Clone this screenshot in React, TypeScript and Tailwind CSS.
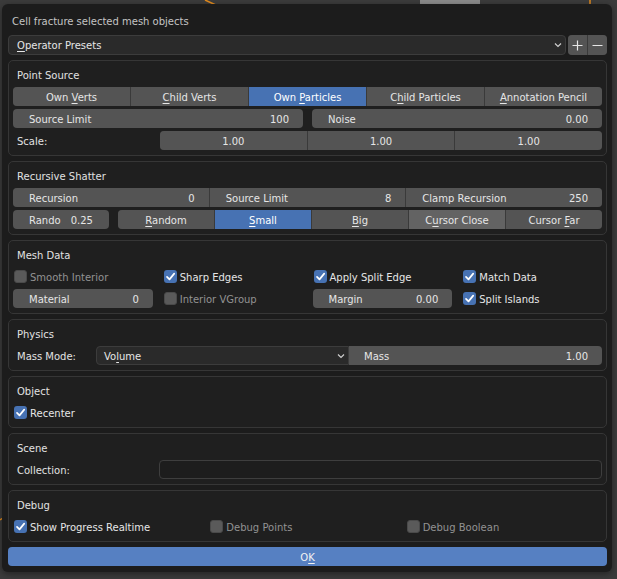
import type { ReactNode } from "react";

const ui = "font-['DejaVu_Sans',sans-serif] text-[10px] leading-none";

function U({ children }: { children: ReactNode }) {
  return <span className="underline decoration-1 underline-offset-2">{children}</span>;
}

function Panel({ title, children }: { title: string; children: ReactNode }) {
  return (
    <section className="rounded-[5px] border border-[#363636] bg-[#1f1f1f] px-[4px] pb-[5px]">
      <div className="flex h-[26px] items-center pl-[4px] pt-[4px] text-[#e2e2e2]">{title}</div>
      <div className="flex flex-col gap-[3px]">{children}</div>
    </section>
  );
}

function Group({ children, className = "" }: { children: ReactNode; className?: string }) {
  return (
    <div className={`flex h-[19px] gap-px overflow-hidden rounded-[4px] bg-[#3a3a3a] ${className}`}>
      {children}
    </div>
  );
}

function Btn({ children, active, hover }: { children: ReactNode; active?: boolean; hover?: boolean }) {
  const bg = active ? "bg-[#4772b3] text-white" : hover ? "bg-[#636363] text-[#e6e6e6]" : "bg-[#545454] text-[#e6e6e6]";
  return (
    <div className={`flex flex-1 items-center justify-center pt-[2px] ${bg}`}>
      <span>{children}</span>
    </div>
  );
}

function Num({ label, value, center }: { label?: string; value: string; center?: boolean }) {
  if (center) {
    return <div className="flex flex-1 items-center justify-center bg-[#545454] pt-[2px] text-[#e6e6e6]">{value}</div>;
  }
  return (
    <div className="flex flex-1 items-center justify-between bg-[#545454] pl-[16px] pr-[14px] pt-[2px] text-[#e6e6e6]">
      <span>{label}</span>
      <span>{value}</span>
    </div>
  );
}

function Field({ label, value }: { label: string; value: string }) {
  return (
    <div className="flex h-[19px] items-center justify-between rounded-[4px] bg-[#545454] pl-[16px] pr-[14px] pt-[2px] text-[#e6e6e6]">
      <span>{label}</span>
      <span>{value}</span>
    </div>
  );
}

function Check({ label, checked }: { label: string; checked?: boolean }) {
  return (
    <div className="flex h-[19px] items-center">
      <span
        className={`ml-px flex h-[13px] w-[13px] items-center justify-center rounded-[3px] ${
          checked ? "bg-[#4772b3]" : "border border-[#4a4a4a] bg-[#5a5a5a]"
        }`}
      >
        {checked && (
          <svg width="11" height="11" viewBox="0 0 11 11">
            <polyline points="2,5.8 4.5,8.4 9.2,2.6" fill="none" stroke="#ffffff" strokeWidth="1.7" strokeLinecap="round" strokeLinejoin="round" />
          </svg>
        )}
      </span>
      <span className={`ml-[3px] pt-[2px] ${checked ? "text-[#e6e6e6]" : "text-[#929292]"}`}>{label}</span>
    </div>
  );
}

function Chevron() {
  return (
    <svg width="8" height="6" viewBox="0 0 8 6">
      <polyline points="1,1.5 4,4.5 7,1.5" fill="none" stroke="#cfcfcf" strokeWidth="1.2" />
    </svg>
  );
}

export default function App() {
  return (
    <div className={`relative h-[579px] w-[617px] overflow-hidden bg-[#3b3b3b] pl-[2px] pt-[4px] ${ui}`}>
      <svg className="absolute inset-0" width="617" height="579" viewBox="0 0 617 579">
        <line x1="205" y1="0" x2="218" y2="6" stroke="#e08a1e" strokeWidth="1.5" />
        <line x1="590" y1="0" x2="590" y2="6" stroke="#e08a1e" strokeWidth="1.5" />
        <line x1="0" y1="520" x2="3" y2="518" stroke="#e08a1e" strokeWidth="1.5" />
        <rect x="420" y="0" width="60" height="4" fill="#8a8a8a" />
      </svg>
      <div className="relative flex h-[568px] w-[610px] flex-col gap-[5px] rounded-[6px] bg-[#1c1c1c] pb-[6px] pl-[6px] pr-[5px] shadow-[0_2px_6px_rgba(0,0,0,0.4)]">
        <div className="-mb-[5px] flex h-[31px] items-center pl-[4px] pt-[4px] text-[#c4c4c4]">
          Cell fracture selected mesh objects
        </div>

        <div className="flex h-[20px] gap-[2px]">
          <div className="flex flex-1 items-center justify-between rounded-[4px] border border-[#3c3c3c] bg-[#2a2a2a] pl-[8px] pr-[3px] text-[#e6e6e6]">
            <span className="pt-[2px]">
              <U>O</U>perator Presets
            </span>
            <Chevron />
          </div>
          <div className="flex gap-px overflow-hidden rounded-[4px] bg-[#3a3a3a]">
            <div className="flex w-[19px] items-center justify-center bg-[#545454]">
              <svg width="11" height="11" viewBox="0 0 11 11">
                <path d="M5.5 0.5v10M0.5 5.5h10" stroke="#e6e6e6" strokeWidth="1.2" />
              </svg>
            </div>
            <div className="flex w-[19px] items-center justify-center bg-[#545454]">
              <svg width="11" height="11" viewBox="0 0 11 11">
                <path d="M0.5 5.5h10" stroke="#e6e6e6" strokeWidth="1.2" />
              </svg>
            </div>
          </div>
        </div>

        <Panel title="Point Source">
          <Group>
            <Btn>
              Own <U>V</U>erts
            </Btn>
            <Btn>
              <U>C</U>hild Verts
            </Btn>
            <Btn active>
              Own <U>P</U>articles
            </Btn>
            <Btn>
              C<U>h</U>ild Particles
            </Btn>
            <Btn>
              <U>A</U>nnotation Pencil
            </Btn>
          </Group>
          <div className="grid grid-cols-2 gap-[9px]">
            <Field label="Source Limit" value="100" />
            <Field label="Noise" value="0.00" />
          </div>
          <div className="flex h-[19px] items-center">
            <div className="w-[147px] pl-[4px] pt-[2px] text-[#e2e2e2]">Scale:</div>
            <Group className="flex-1">
              <Num value="1.00" center />
              <Num value="1.00" center />
              <Num value="1.00" center />
            </Group>
          </div>
        </Panel>

        <Panel title="Recursive Shatter">
          <Group>
            <Num label="Recursion" value="0" />
            <Num label="Source Limit" value="8" />
            <Num label="Clamp Recursion" value="250" />
          </Group>
          <div className="flex gap-[9px]">
            <div className="flex h-[19px] w-[96px] items-center rounded-[4px] bg-[#545454] pl-[16px] pt-[2px] text-[#e6e6e6]">
              <span>Rando</span>
              <span className="ml-[10px]">0.25</span>
            </div>
            <Group className="flex-1">
              <Btn>
                <U>R</U>andom
              </Btn>
              <Btn active>
                <U>S</U>mall
              </Btn>
              <Btn>
                <U>B</U>ig
              </Btn>
              <Btn hover>
                C<U>u</U>rsor Close
              </Btn>
              <Btn>
                Cursor <U>F</U>ar
              </Btn>
            </Group>
          </div>
        </Panel>

        <Panel title="Mesh Data">
          <div className="grid grid-cols-4 gap-x-[10px] gap-y-[3px]">
            <Check label="Smooth Interior" />
            <Check label="Sharp Edges" checked />
            <Check label="Apply Split Edge" checked />
            <Check label="Match Data" checked />
            <Field label="Material" value="0" />
            <Check label="Interior VGroup" />
            <Field label="Margin" value="0.00" />
            <Check label="Split Islands" checked />
          </div>
        </Panel>

        <Panel title="Physics">
          <div className="flex h-[19px] items-center">
            <div className="w-[83px] pl-[4px] pt-[2px] text-[#e2e2e2]">Mass Mode:</div>
            <div className="flex h-full w-[253px] items-center justify-between rounded-l-[4px] border border-[#3c3c3c] bg-[#2a2a2a] pl-[7px] pr-[3px] text-[#e6e6e6]">
              <span className="pt-[2px]">
                Vo<U>l</U>ume
              </span>
              <Chevron />
            </div>
            <div className="flex h-full flex-1 items-center justify-between rounded-r-[4px] bg-[#545454] pl-[15px] pr-[14px] pt-[2px] text-[#e6e6e6]">
              <span>Mass</span>
              <span>1.00</span>
            </div>
          </div>
        </Panel>

        <Panel title="Object">
          <Check label="Recenter" checked />
        </Panel>

        <Panel title="Scene">
          <div className="flex h-[19px] items-center">
            <div className="w-[146px] pl-[4px] pt-[2px] text-[#e2e2e2]">Collection:</div>
            <div className="h-full flex-1 rounded-[4px] border border-[#3e3e3e] bg-[#1d1d1d]" />
          </div>
        </Panel>

        <Panel title="Debug">
          <div className="grid grid-cols-3">
            <Check label="Show Progress Realtime" checked />
            <Check label="Debug Points" />
            <Check label="Debug Boolean" />
          </div>
        </Panel>

        <div className="flex h-[19px] items-center justify-center rounded-[4px] bg-[#5680c2] pt-[2px] text-[#f2f2f2]">
          <span>
            O<U>K</U>
          </span>
        </div>
      </div>
    </div>
  );
}
